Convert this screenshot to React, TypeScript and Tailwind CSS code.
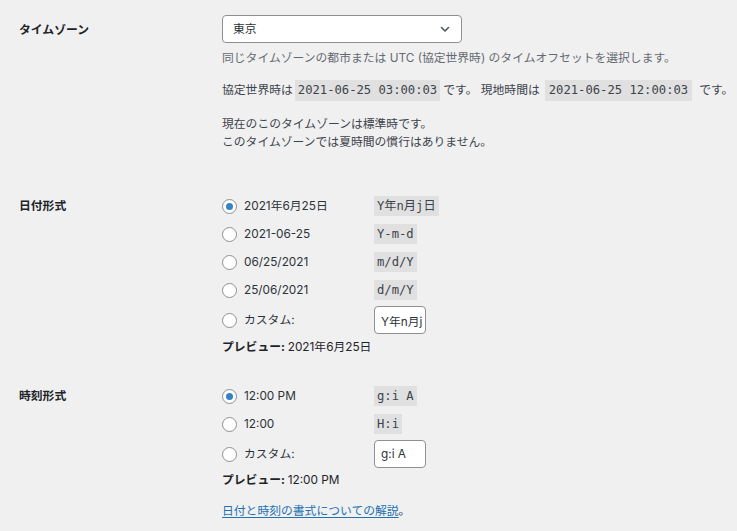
import React from 'react';

const mono = "font-['DejaVu_Sans_Mono','Noto_Sans_CJK_JP',monospace]";

const dateFormats = [
  { label: '2021年6月25日', code: 'Y年n月j日', checked: true },
  { label: '2021-06-25', code: 'Y-m-d' },
  { label: '06/25/2021', code: 'm/d/Y' },
  { label: '25/06/2021', code: 'd/m/Y' },
];

const timeFormats = [
  { label: '12:00 PM', code: 'g:i A', checked: true },
  { label: '12:00', code: 'H:i' },
];

const Radio = ({ checked }: { checked?: boolean }) => (
  <span className="w-[15px] h-[15px] shrink-0 rounded-full border border-[#8c8f94] bg-white flex items-center justify-center mr-[7px]">
    {checked && <span className="w-[7px] h-[7px] rounded-full bg-[#3582c4]" />}
  </span>
);

const Code = ({ children }: { children: React.ReactNode }) => (
  <code className={`${mono} text-[12.2px] leading-[20px] h-[20px] px-[3px] bg-[#e0e0e1] text-[#3c434a]`}>{children}</code>
);

const FormatOptions = ({ items, custom }: { items: { label: string; code: string; checked?: boolean }[]; custom: string }) => (
  <>
    {items.map((f) => (
      <div key={f.code} className="flex items-center h-[28px]">
        <Radio checked={f.checked} />
        <span className="w-[130px] text-[#2c3338]">{f.label}</span>
        <Code>{f.code}</Code>
      </div>
    ))}
    <div className="flex items-center h-[28px] mt-[2px]">
      <Radio />
      <span className="w-[130px] text-[#2c3338]">カスタム:</span>
      <input
        readOnly
        value={custom}
        className="w-[52px] h-[28px] rounded-[4px] border border-[#8c8f94] bg-white pl-[6px] pr-[2px] text-[11.8px] text-[#2c3338] outline-none"
      />
    </div>
  </>
);

export default function App() {
  return (
    <div className="min-h-[531px] w-full bg-[#f0f0f1] pl-[19px] text-[11.8px] leading-[18px] text-[#3c434a] font-['Inter','Noto_Sans_CJK_JP',sans-serif]">
      {/* Timezone */}
      <div className="flex">
        <div className="w-[203px] shrink-0 pt-[21px] font-bold text-[#1d2327]">タイムゾーン</div>
        <div className="pt-[15px]">
          <div className="w-[240px] h-[28px] rounded-[4px] border border-[#8c8f94] bg-white flex items-center justify-between pl-[10px] pr-[10px] text-[#2c3338]">
            <span>東京</span>
            <svg width="12" height="12" viewBox="0 0 12 12" fill="none">
              <path d="M2.5 4.5 L6 8 L9.5 4.5" stroke="#50575e" strokeWidth="1.6" strokeLinecap="round" strokeLinejoin="round" />
            </svg>
          </div>
          <p className="mt-[6px] text-[#646970]">同じタイムゾーンの都市または UTC (協定世界時) のタイムオフセットを選択します。</p>
          <p className="mt-[12px] flex items-center h-[22px] whitespace-nowrap">
            <span className="mr-[2px]">協定世界時は</span>
            <code className={`${mono} text-[12.2px] leading-[21px] px-[3px] bg-[#e0e0e1]`}>2021-06-25 03:00:03</code>
            <span className="ml-[3px]">です。 現地時間は</span>
            <code className={`${mono} text-[12.2px] leading-[21px] px-[4px] ml-[5px] bg-[#e0e0e1]`}>2021-06-25 12:00:03</code>
            <span className="ml-[7px]">です。</span>
          </p>
          <p className="mt-[14px]">
            現在のこのタイムゾーンは標準時です。
            <br />
            このタイムゾーンでは夏時間の慣行はありません。
          </p>
        </div>
      </div>

      {/* Date format */}
      <div className="flex mt-[41px]">
        <div className="w-[203px] shrink-0 pt-[5px] font-bold text-[#1d2327]">日付形式</div>
        <div>
          <FormatOptions items={dateFormats} custom="Y年n月j日" />
          <p className="mt-[4px] font-bold text-[#1d2327]">
            プレビュー: <span className="font-normal">2021年6月25日</span>
          </p>
        </div>
      </div>

      {/* Time format */}
      <div className="flex mt-[26px]">
        <div className="w-[203px] shrink-0 pt-[5px] font-bold text-[#1d2327]">時刻形式</div>
        <div>
          <FormatOptions items={timeFormats} custom="g:i A" />
          <p className="mt-[3px] font-bold text-[#1d2327]">
            プレビュー: <span className="font-normal">12:00 PM</span>
          </p>
          <p className="mt-[13px]">
            <a href="#" className="text-[#2271b1] underline underline-offset-2">日付と時刻の書式についての解説</a>。
          </p>
        </div>
      </div>
    </div>
  );
}
